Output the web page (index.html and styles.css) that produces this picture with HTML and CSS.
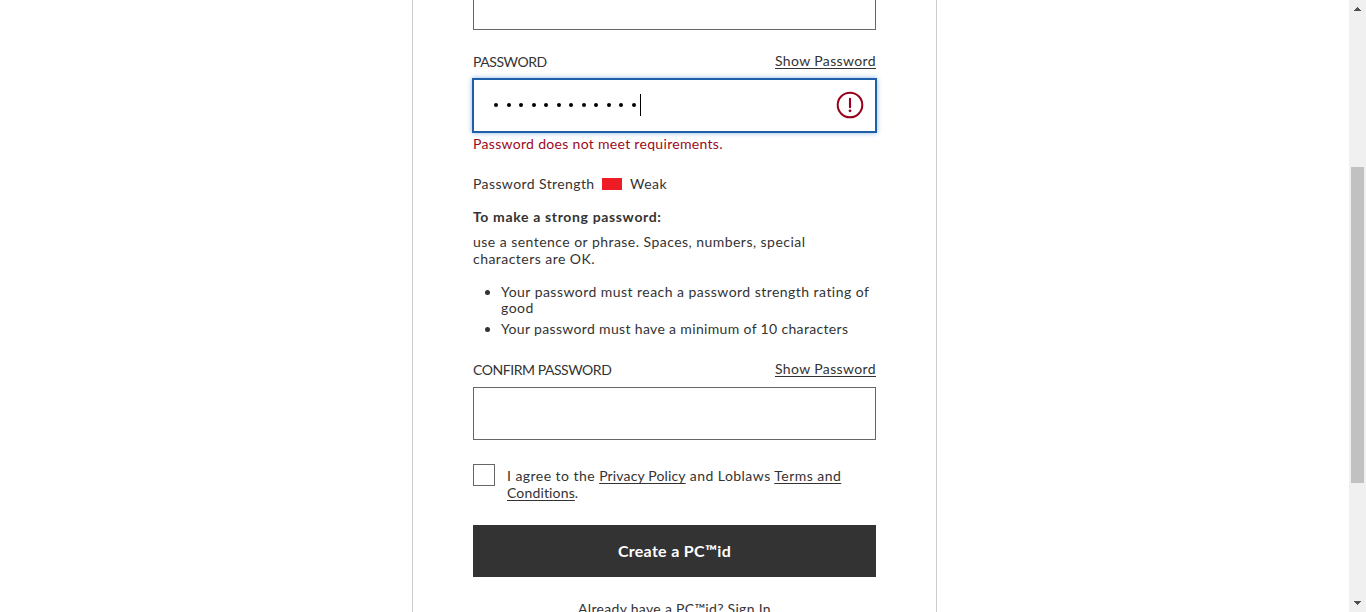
FILE: index.html
```
<!DOCTYPE html>
<html lang="en">
<head>
<meta charset="utf-8">
<title>Create a PC™id</title>
<link rel="stylesheet" href="styles.css">
</head>
<body>
<div class="viewport">
  <main class="page">
    <form class="card">
      <div class="field field-cut"></div>
      <div class="label-row first">
        <span class="label">PASSWORD</span>
        <a class="show">Show Password</a>
      </div>
      <div class="field focused">
        <span class="dots"><i></i><i></i><i></i><i></i><i></i><i></i><i></i><i></i><i></i><i></i><i></i><i></i></span>
        <span class="caret"></span>
        <svg class="alert" width="28" height="28" viewBox="0 0 28 28">
          <circle cx="14" cy="14" r="12.3" fill="none" stroke="#960018" stroke-width="2"/>
          <path d="M14 7.8v8.4" stroke="#960018" stroke-width="2.1" stroke-linecap="round"/>
          <circle cx="14" cy="19.8" r="1.4" fill="#960018"/>
        </svg>
      </div>
      <p class="error">Password does not meet requirements.</p>
      <div class="strength"><span class="strength-name">Password Strength</span><span class="meter"></span><span class="rating">Weak</span></div>
      <p class="tip-title">To make a strong password:</p>
      <p class="tip">use a sentence or phrase. Spaces, numbers, special<br>characters are OK.</p>
      <ul class="rules">
        <li>Your password must reach a password strength rating of<br>good</li>
        <li class="rule-length">Your password must have a minimum of 10 characters</li>
      </ul>
      <div class="label-row">
        <span class="label">CONFIRM PASSWORD</span>
        <a class="show">Show Password</a>
      </div>
      <div class="field"></div>
      <div class="agree">
        <span class="checkbox"></span>
        <p class="terms">I agree to the <a class="link-tight">Privacy Policy</a> and Loblaws <a>Terms and</a><br><a class="link-tight">Conditions</a>.</p>
      </div>
      <button class="submit" type="button">Create a PC™id</button>
      <p class="signin">Already have a PC™id? Sign In</p>
    </form>
  </main>
  <div class="scrollbar">
    <svg width="17" height="17" viewBox="0 0 17 17" shape-rendering="crispEdges"><path d="M8 7h1v1h1v1h1v1h1v1H5v-1h1V9h1V8h1z" fill="#505050"/></svg>
    <div class="track"><div class="thumb"></div></div>
    <svg width="17" height="17" viewBox="0 0 17 17" shape-rendering="crispEdges"><path d="M5 6h7v1h-1v1h-1v1H9v1H8V9H7V8H6V7H5z" fill="#505050"/></svg>
  </div>
</div>
</body>
</html>
```
FILE: styles.css
```
* { box-sizing: border-box; }
body { margin: 0; height: 612px; overflow: hidden; background: #fff; color: #333; font: 14px/17px Lato, "Open Sans", sans-serif; letter-spacing: 0.46px; }
p, ul { margin: 0; padding: 0; }
a { color: inherit; text-decoration: underline; text-underline-offset: 2px; text-decoration-thickness: 1px; text-decoration-skip-ink: none; }
.viewport { display: flex; height: 612px; overflow: hidden; }
.page { flex: 1; display: flex; justify-content: center; }
.card { width: 525px; height: 640px; padding: 0 60px; border: solid #ccc; border-width: 0 1px; white-space: nowrap; }
.field { height: 53px; border: 1px solid #666; background: #fff; }
.field-cut { height: 30px; border-top: 0; }
.label-row { display: flex; justify-content: space-between; margin: 24px 0 9px; }
.label-row.first { margin-top: 23px; }
.label { letter-spacing: -0.45px; }
.show { margin-top: -1px; letter-spacing: 0.37px; }
.focused { display: flex; align-items: center; padding: 0 11px 2px 20px; border-color: #1f5ea8; box-shadow: 0 0 0 1px #1f5ea8, 0 0 5px 1px #8fb6e4; }
.dots { display: flex; gap: 8.55px; }
.dots i { width: 4px; height: 4px; border-radius: 50%; background: #000; }
.caret { width: 1px; height: 22px; margin-left: 4px; background: #000; }
.alert { margin-left: auto; }
.error { margin-top: 3px; color: #9b0a22; letter-spacing: 0.31px; }
.strength { display: flex; align-items: center; margin-top: 23px; }
.strength-name { width: 129px; letter-spacing: 0.4px; }
.meter { width: 20px; height: 12px; margin-right: 8px; background: #ee1c25; }
.tip-title { margin-top: 16px; font-weight: 700; letter-spacing: 0.65px; }
.tip { margin-top: 8px; }
.rules { margin-top: 17px; padding-left: 28px; line-height: 16px; }
.rules li + li { margin-top: 5px; }
.rule-length { letter-spacing: 0.34px; }
.agree { display: flex; margin-top: 24px; gap: 12px; }
.checkbox { width: 22px; height: 22px; border: 1px solid #666; }
.terms { padding-top: 3px; }
.link-tight { letter-spacing: 0.15px; }
.submit { display: block; width: 100%; height: 52px; margin-top: 24px; padding: 0; border: 0; background: #333; color: #fff; font: 700 16px/20px Lato, "Open Sans", sans-serif; letter-spacing: 0.3px; }
.signin { margin-top: 23px; text-align: center; letter-spacing: 0.31px; }
.scrollbar { display: flex; flex-direction: column; width: 17px; background: #f0f0f0; }
.track { flex: 1; padding: 150px 2px 0; }
.thumb { height: 316px; background: #c1c1c1; }
```
